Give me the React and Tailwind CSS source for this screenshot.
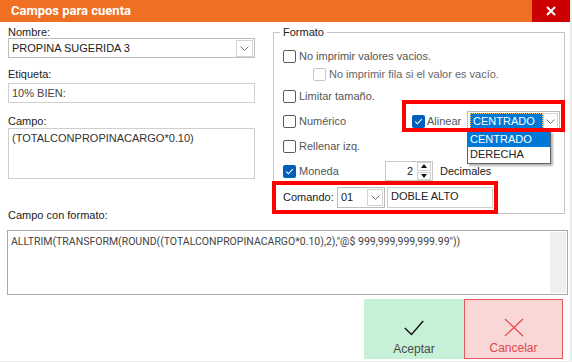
import React from 'react'

const Check = ({ checked, disabled }) =>
  checked ? (
    <span className="w-[13px] h-[13px] shrink-0 rounded-[2px] bg-[#005fb8] flex items-center justify-center">
      <svg width="13" height="13" viewBox="0 0 13 13">
        <path d="M3.2 6.6 L5.4 8.8 L9.8 4.2" stroke="#fff" strokeWidth="1.1" fill="none" />
      </svg>
    </span>
  ) : (
    <span
      className={
        disabled
          ? 'w-[13px] h-[13px] shrink-0 rounded-[2px] border border-[#c6c6c6] bg-white'
          : 'w-[13px] h-[13px] shrink-0 rounded-[2px] border border-[#5c5c5c] bg-white'
      }
    />
  )

const Arrow = ({ w = 'w-[17px]' }) => (
  <span className={`${w} h-[17px] shrink-0 border border-[#d4d4d4] bg-white flex items-center justify-center`}>
    <svg width="9" height="5" viewBox="0 0 9 5">
      <path d="M0.5 0.5 L4.5 4.5 L8.5 0.5" stroke="#707070" fill="none" />
    </svg>
  </span>
)

const Row = ({ children, className }) => (
  <div className={`h-[16px] flex items-center ${className}`}>{children}</div>
)

export default function App() {
  return (
    <div className="relative w-[572px] h-[362px] overflow-hidden bg-[#ececec] font-['Liberation_Sans',Arial,sans-serif] text-[11px] text-[#222]">
      <div className="w-[570px] h-[361px] bg-white flex flex-col">
        {/* barra de título */}
        <div className="h-[22px] shrink-0 bg-[#ef7022] flex items-center justify-between">
          <span className="pl-[11px] text-white font-bold text-[13px] font-['Roboto',sans-serif]">Campos para cuenta</span>
          <span className="w-[38px] h-[22px] bg-[#cc0000] flex items-center justify-center">
            <svg width="10" height="10" viewBox="0 0 10 10">
              <path d="M1 1 L9 9 M9 1 L1 9" stroke="#fff" strokeWidth="2" />
            </svg>
          </span>
        </div>

        <div className="flex">
          {/* columna izquierda */}
          <div className="w-[247px] ml-[8px] pt-[4px] flex flex-col">
            <div className="h-[12px] leading-[12px]">Nombre:</div>
            <div className="h-[20px] border border-[#bdbdbd] flex items-center justify-between pl-[3px] pr-[1px]">
              <span className="text-[#222]">PROPINA SUGERIDA 3</span>
              <Arrow />
            </div>
            <div className="mt-[10px] h-[12px] leading-[12px]">Etiqueta:</div>
            <div className="mt-[3px] h-[20px] border border-[#cfcfcf] flex items-center pl-[3px] text-[#444]">10% BIEN:</div>
            <div className="mt-[12px] h-[12px] leading-[12px]">Campo:</div>
            <div className="mt-[1px] h-[51px] border border-[#cfcfcf] pl-[3px] pt-[2px] leading-[14px] text-[#333]">
              (TOTALCONPROPINACARGO*0.10)
            </div>
            <div className="mt-[30px] h-[12px] leading-[12px]">Campo con formato:</div>
          </div>

          {/* grupo Formato */}
          <div className="relative ml-[18px] mt-[10px] w-[292px] h-[182px] border border-[#c4c4c4] pl-[9px] pt-[15px] text-[#555]">
            <span className="absolute left-[6px] top-[-8px] px-[3px] bg-white leading-[14px] text-[#222]">Formato</span>
            <Row className="gap-[3px]">
              <Check />
              <span>No imprimir valores vacios.</span>
            </Row>
            <Row className="mt-[2px] pl-[30px] gap-[3px]">
              <Check disabled />
              <span className="text-[#666]">No imprimir fila si el valor es vacío.</span>
            </Row>
            <Row className="mt-[6px] gap-[3px]">
              <Check />
              <span>Limitar tamaño.</span>
            </Row>
            <Row className="mt-[9px]">
              <div className="w-[129px] flex items-center gap-[3px]">
                <Check />
                <span>Numérico</span>
              </div>
              <Check checked />
              <span className="w-[42px] pl-[2px]">Alinear</span>
              <div className="w-[93px] h-[21px] shrink-0 border border-[#bdbdbd] flex items-center justify-between pl-[2px] pr-[1px]">
                <span className="h-[16px] w-[73px] bg-[#0078d7] text-white leading-[14px] pl-[2px] border border-dotted border-[#f3c36b]">CENTRADO</span>
                <Arrow w="w-[15px]" />
              </div>
            </Row>
            <Row className="mt-[9px] gap-[3px]">
              <Check />
              <span>Rellenar izq.</span>
            </Row>
            <Row className="mt-[9px]">
              <div className="w-[102px] flex items-center gap-[3px]">
                <Check checked />
                <span>Moneda</span>
              </div>
              <div className="w-[48px] h-[20px] shrink-0 border border-[#c8c8c8] flex items-center">
                <span className="flex-1 text-right pr-[4px] text-[#222]">2</span>
                <div className="w-[15px] h-[18px] flex flex-col gap-[1px] pr-[1px]">
                  <span className="h-[8.5px] border border-[#cfcfcf] flex items-center justify-center">
                    <svg width="6" height="4" viewBox="0 0 6 4"><path d="M0 4 L3 0 L6 4 Z" fill="#111" /></svg>
                  </span>
                  <span className="h-[8.5px] border border-[#cfcfcf] flex items-center justify-center">
                    <svg width="6" height="4" viewBox="0 0 6 4"><path d="M0 0 L3 4 L6 0 Z" fill="#111" /></svg>
                  </span>
                </div>
              </div>
              <span className="ml-[7px] text-[#222]">Decimales</span>
            </Row>
            <div className="mt-[8px] h-[21px] flex items-center text-[#222]">
              <span className="w-[54px]">Comando:</span>
              <div className="w-[48px] h-[21px] border border-[#bdbdbd] flex items-center justify-between pl-[3px] pr-[1px]">
                <span>01</span>
                <Arrow w="w-[16px]" />
              </div>
              <div className="ml-[2px] w-[106px] h-[21px] border border-[#cfcfcf] pl-[3px] pt-[2px] leading-[13px]">DOBLE ALTO</div>
            </div>
          </div>
        </div>

        {/* campo con formato */}
        <div className="mt-[9px] ml-[7px] w-[561px] h-[65px] border border-[#a9a9a9] flex">
          <div className="flex-1 pl-[3px] pt-[4px] leading-[14px] text-[10.5px] text-[#444] font-['Roboto',sans-serif]">
            ALLTRIM(TRANSFORM(ROUND((TOTALCONPROPINACARGO*0.10),2),"@$ 999,999,999,999.99"))
          </div>
          <div className="w-[16px] my-px mr-px bg-[#efefef]" />
        </div>

        {/* botones */}
        <div className="mt-[4px] flex justify-end pr-[7px]">
          <div className="w-[100px] h-[60px] bg-[#c6f1d6] flex flex-col items-center pt-[21px]">
            <svg width="20" height="16" viewBox="0 0 20 16">
              <path d="M0.8 8 L7.5 14.5 L19.2 1" stroke="#111" strokeWidth="1.4" fill="none" />
            </svg>
            <span className="mt-[6px] leading-[14px] text-[12px] text-[#4a4a4a]">Aceptar</span>
          </div>
          <div className="w-[99px] h-[60px] bg-[#f9d7d7] border border-[#e35a5a] flex flex-col items-center pt-[18px]">
            <svg width="20" height="19" viewBox="0 0 20 19">
              <path d="M1 1 L19 18 M19 1 L1 18" stroke="#e8474b" strokeWidth="1.2" fill="none" />
            </svg>
            <span className="mt-[4px] leading-[14px] text-[12px] text-[#e04848]">Cancelar</span>
          </div>
        </div>
      </div>

      {/* lista desplegable abierta */}
      <div className="absolute left-[467px] top-[131px] w-[84px] h-[33px] bg-white border border-[#646464] shadow-[2px_2px_2px_rgba(0,0,0,0.3)] text-[#222]">
        <div className="h-[15px] leading-[15px] pl-[2px] bg-[#0078d7] text-white">CENTRADO</div>
        <div className="h-[15px] leading-[15px] pl-[2px]">DERECHA</div>
      </div>

      {/* recuadros rojos */}
      <div className="absolute left-[402px] top-[100px] w-[163px] h-[32px] border-[4px] border-[#ff0000]" />
      <div className="absolute left-[272px] top-[181px] w-[226px] h-[33px] border-[4px] border-[#ff0000]" />
    </div>
  )
}
